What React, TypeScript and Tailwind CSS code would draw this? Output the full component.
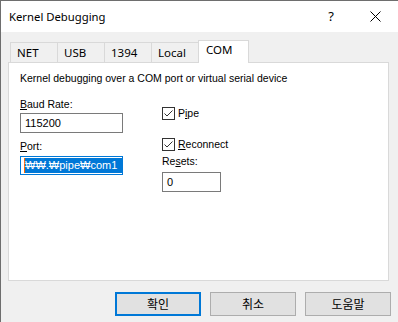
import React from 'react';

const ui = { fontFamily: '"Noto Sans", "Noto Sans CJK KR", sans-serif' };
const dlg = { fontFamily: '"Liberation Sans", "Noto Sans CJK KR", sans-serif' };
const kr = { fontFamily: '"Noto Sans CJK KR", sans-serif' };

const tabs = ['NET', 'USB', '1394', 'Local'];

function Check({ children }: { children: React.ReactNode }) {
  return (
    <div className="flex items-center gap-[3px] h-[13px]">
      <span className="w-[13px] h-[13px] border border-[#333333] bg-white flex items-center justify-center">
        <svg width="11" height="11" viewBox="0 0 11 11">
          <path d="M1.5 5.5 L4 8 L9.5 2.5" fill="none" stroke="#333333" strokeWidth="1" />
        </svg>
      </span>
      <span className="text-[10.5px] leading-[13px] text-black">{children}</span>
    </div>
  );
}

export default function App() {
  return (
    <div className="w-[398px] h-[322px] bg-[#f0f0f0] border-l border-t border-[#6e6e6e] overflow-hidden">
      <div className="h-[31px] bg-white flex items-center pl-[8px]" style={ui}>
        <span className="text-[11.3px] text-black leading-none">Kernel Debugging</span>
        <span className="ml-auto text-[13px] text-black leading-none">?</span>
        <svg className="ml-[36px] mr-[17px]" width="11" height="11" viewBox="0 0 11 11">
          <path d="M0.5 0.5 L10.5 10.5 M10.5 0.5 L0.5 10.5" stroke="#000" strokeWidth="1" />
        </svg>
      </div>

      <div className="pl-[7px] pt-[8px]">
        <div className="flex items-end h-[22px] pl-[2px]" style={ui}>
          {tabs.map((t) => (
            <div
              key={t}
              className="w-[48px] h-[20px] border border-b-0 border-[#d9d9d9] -mr-px bg-[#f0f0f0] text-[11.5px] text-black pl-[6px] leading-[19px]"
            >
              {t}
            </div>
          ))}
          <div className="w-[51px] h-[23px] border border-b-0 border-[#d9d9d9] bg-white text-[11.5px] text-black pl-[7px] leading-[17px] -mb-px relative z-10">
            COM
          </div>
        </div>

        <div className="w-[381px] h-[219px] bg-white border border-[#d9d9d9] pl-[11px] pt-[9px]" style={dlg}>
          <div className="text-[10.5px] leading-[13px] text-black">
            Kernel debugging over a COM port or virtual serial device
          </div>
          <div className="flex mt-[13px]">
            <div className="w-[103px] flex flex-col">
              <div className="text-[10.5px] leading-[13px] text-black">
                <u>B</u>aud Rate:
              </div>
              <div className="mt-[2px] h-[20px] border border-[#7a7a7a] bg-white pl-[4px] text-[11px] leading-[18px] text-black">
                115200
              </div>
              <div className="mt-[7px] text-[10.5px] leading-[13px] text-black">
                <u>P</u>ort:
              </div>
              <div className="mt-[3px] h-[19px] border border-[#0078d7] bg-white pl-[3px] pt-px flex">
                <span className="w-px h-[15px] bg-[#ff6a00]" />
                <span className="flex-1 h-[15px] bg-[#0078d7] text-white text-[11px] leading-[15px]">
                  ₩₩.₩pipe₩com1
                </span>
              </div>
            </div>
            <div className="ml-[39px] flex flex-col pt-[9px]">
              <Check>
                P<u>i</u>pe
              </Check>
              <div className="mt-[18px]">
                <Check>
                  <u>R</u>econnect
                </Check>
              </div>
              <div className="mt-[4px] text-[10.5px] leading-[13px] text-black">
                Re<u>s</u>ets:
              </div>
              <div className="mt-[4px] w-[59px] h-[20px] border border-[#7a7a7a] bg-white pl-[4px] text-[11px] leading-[18px] text-black">
                0
              </div>
            </div>
          </div>
        </div>

        <div className="flex justify-end gap-[9px] mt-[11px] pr-[7px]" style={kr}>
          <button className="w-[86px] h-[24px] border-2 border-[#0078d7] bg-[#e1e1e1] text-[12px] text-black leading-none">
            확인
          </button>
          <button className="w-[86px] h-[24px] border border-[#adadad] bg-[#e1e1e1] text-[12px] text-black leading-none">
            취소
          </button>
          <button className="w-[86px] h-[24px] border border-[#adadad] bg-[#e1e1e1] text-[12px] text-black leading-none">
            도움말
          </button>
        </div>
      </div>
    </div>
  );
}
